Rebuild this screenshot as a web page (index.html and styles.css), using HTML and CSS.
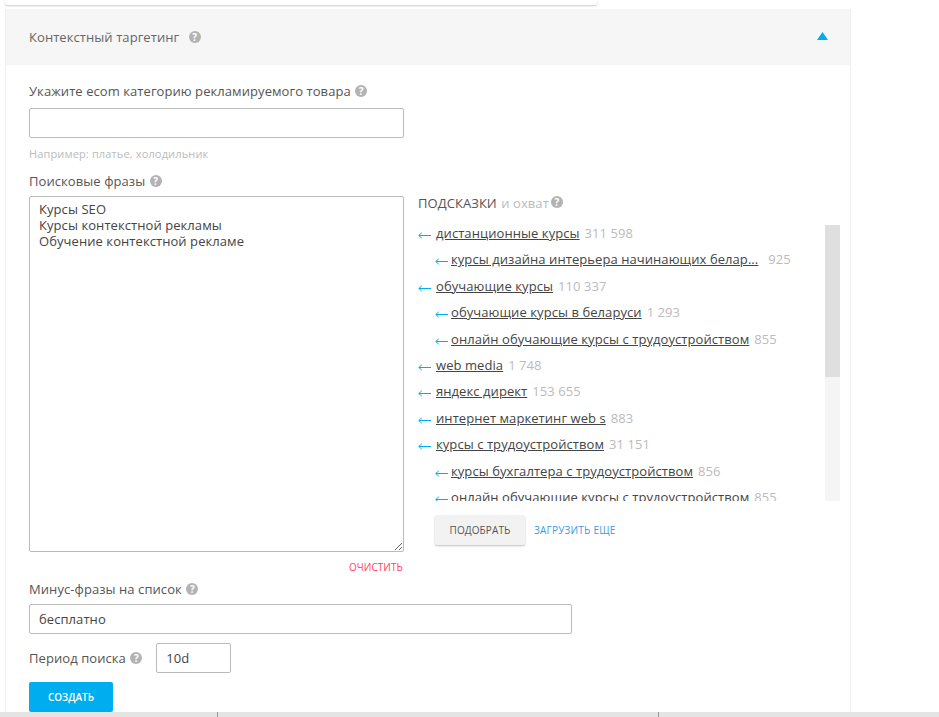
FILE: index.html
```html
<!DOCTYPE html>
<html lang="ru">
<head>
<meta charset="utf-8">
<title>Контекстный таргетинг</title>
<link rel="stylesheet" href="styles.css">
</head>
<body>
<svg class="defs" width="0" height="0"><symbol id="arrow-left" viewBox="0 0 13 7"><path d="M13 3.5H.8M3.8.8.8 3.5l3 2.7" fill="none" stroke="#00aeef"/></symbol></svg>
<div class="page">
  <div class="top-card"></div>
  <section class="panel">
    <header class="panel-head">
      <h2 class="panel-title">Контекстный таргетинг <span class="q q-title">?</span></h2>
      <svg class="caret" width="11" height="8" viewBox="0 0 11 8"><path d="M5.5 0 11 8H0z" fill="#00aeef"/></svg>
    </header>
    <div class="panel-body">
      <label class="label label-first">Укажите ecom категорию рекламируемого товара <span class="q">?</span></label>
      <input class="field field-cat" type="text">
      <p class="hint">Например: платье, холодильник</p>
      <label class="label label-phrases">Поисковые фразы <span class="q">?</span></label>
      <div class="columns">
        <div class="col-left">
          <textarea class="phrases">Курсы SEO
Курсы контекстной рекламы
Обучение контекстной рекламе</textarea>
          <a class="clear">ОЧИСТИТЬ</a>
        </div>
        <div class="col-right">
          <div class="hints-title">ПОДСКАЗКИ <span class="muted">и охват</span><span class="q q-tight">?</span></div>
          <div class="scroll-box">
            <ul class="hints">
              <li class="hint-row"><svg class="arrow"><use href="#arrow-left"/></svg><a>дистанционные курсы</a><span class="num">311 598</span></li>
              <li class="hint-row sub"><svg class="arrow"><use href="#arrow-left"/></svg><a>курсы дизайна интерьера начинающих белар...</a><span class="num num-wide">925</span></li>
              <li class="hint-row"><svg class="arrow"><use href="#arrow-left"/></svg><a>обучающие курсы</a><span class="num">110 337</span></li>
              <li class="hint-row sub"><svg class="arrow"><use href="#arrow-left"/></svg><a>обучающие курсы в беларуси</a><span class="num">1 293</span></li>
              <li class="hint-row sub"><svg class="arrow"><use href="#arrow-left"/></svg><a>онлайн обучающие курсы с трудоустройством</a><span class="num">855</span></li>
              <li class="hint-row"><svg class="arrow"><use href="#arrow-left"/></svg><a>web media</a><span class="num">1 748</span></li>
              <li class="hint-row"><svg class="arrow"><use href="#arrow-left"/></svg><a>яндекс директ</a><span class="num">153 655</span></li>
              <li class="hint-row"><svg class="arrow"><use href="#arrow-left"/></svg><a>интернет маркетинг web s</a><span class="num">883</span></li>
              <li class="hint-row"><svg class="arrow"><use href="#arrow-left"/></svg><a>курсы с трудоустройством</a><span class="num">31 151</span></li>
              <li class="hint-row sub"><svg class="arrow"><use href="#arrow-left"/></svg><a>курсы бухгалтера с трудоустройством</a><span class="num">856</span></li>
              <li class="hint-row sub"><svg class="arrow"><use href="#arrow-left"/></svg><a>онлайн обучающие курсы с трудоустройством</a><span class="num">855</span></li>
            </ul>
            <div class="scrollbar"><div class="thumb"></div></div>
          </div>
          <div class="actions">
            <button class="btn-pick" type="button">ПОДОБРАТЬ</button>
            <a class="more">ЗАГРУЗИТЬ ЕЩЕ</a>
          </div>
        </div>
      </div>
      <label class="label label-minus">Минус-фразы на список <span class="q">?</span></label>
      <input class="field field-minus" type="text" value="бесплатно">
      <div class="period">
        <label class="label label-period">Период поиска <span class="q">?</span></label>
        <input class="field field-period" type="text" value="10d">
      </div>
      <button class="btn-create" type="button">СОЗДАТЬ</button>
    </div>
  </section>
  <div class="bottom-bar"><span class="seg seg-a"></span><span class="seg seg-b"></span></div>
</div>
</body>
</html>
```
FILE: styles.css
```css
* { box-sizing: border-box; }
html, body { margin: 0; padding: 0; background: #fff; }
body { font-family: "Open Sans", "Noto Sans", sans-serif; font-size: 13px; letter-spacing: .07px; color: #555; }
.defs { position: absolute; }
.page { width: 939px; height: 717px; overflow: hidden; display: flex; flex-direction: column; }
.top-card { flex: none; width: 592px; height: 5px; margin: 0 0 4px 5px; background: #fff; border-radius: 0 0 2px 2px; box-shadow: 0 1px 2px rgba(0,0,0,.22); }
.panel { flex: 1; min-height: 0; width: 846px; margin-left: 5px; border: solid #eee; border-width: 0 1px; overflow: hidden; }
.panel-head { height: 56px; background: #f6f6f6; display: flex; align-items: center; justify-content: space-between; padding: 0 22px 0 23px; }
.panel-title { margin: 0; font-size: 13px; line-height: 18px; font-weight: 400; color: #666; }
.q { display: inline-block; width: 12px; height: 12px; border-radius: 50%; background: #b3b3b3; color: #fff; font-size: 10px; line-height: 12px; font-weight: 700; text-align: center; letter-spacing: 0; vertical-align: 1px; }
.q-title { margin-left: 6px; }
.q-tight { margin-left: 2px; vertical-align: 2px; }
.label .q { margin-left: 1px; }
.caret { display: block; margin-top: -3px; }
.panel-body { padding: 17px 0 0 23px; }
.label { display: block; font-size: 13px; line-height: 18px; color: #555; }
.field { display: block; height: 30px; border: 1px solid #bbb; border-radius: 2px; padding: 0 9px; font: 13px "Open Sans", "Noto Sans", sans-serif; letter-spacing: .07px; color: #444; background: #fff; outline: 0; }
.field-cat { width: 375px; margin-top: 8px; }
.hint { margin: 8px 0 0; font-size: 11px; letter-spacing: .14px; line-height: 16px; color: #bbb; }
.label-phrases { margin-top: 10px; }
.columns { display: flex; margin-top: 6px; }
.col-left { width: 375px; flex: none; }
.phrases { display: block; width: 375px; height: 356px; border: 1px solid #bbb; border-radius: 2px; padding: 4px 9px; font: 13px/16px "Open Sans", "Noto Sans", sans-serif; letter-spacing: .07px; color: #444; background: #fff; outline: 0; resize: vertical; }
.clear { display: block; margin-top: 8px; text-align: right; padding-right: 1px; font-size: 10px; line-height: 14px; color: #ff4560; }
.col-right { width: 422px; flex: none; margin-left: 14px; }
.hints-title { font-size: 13px; line-height: 14px; color: #555; }
.muted { color: #bbb; margin-left: 1px; }
.scroll-box { margin-top: 15px; height: 276px; display: flex; justify-content: space-between; overflow: hidden; }
.hints { list-style: none; margin: -1px 0 0; padding: 0; width: 400px; }
.hint-row { height: 26.4px; font-size: 13px; line-height: 18px; white-space: nowrap; }
.hint-row.sub { padding-left: 17px; }
.arrow { display: inline-block; width: 13px; height: 7px; margin-right: 5px; vertical-align: -1px; }
.sub .arrow { margin-right: 3px; }
.hint-row a { color: #444; text-decoration: underline; }
.num { margin-left: 5px; color: #bbb; }
.num-wide { margin-left: 10px; }
.scrollbar { width: 15px; height: 276px; background: #f5f5f5; flex: none; }
.thumb { height: 152px; background: #dfdfdf; }
.actions { display: flex; align-items: center; margin: 14px 0 0 17px; }
.btn-pick { width: 90px; height: 30px; border: 0; border-radius: 2px; background: #f2f2f2; box-shadow: 0 1px 2px rgba(0,0,0,.25); font: 10px "Open Sans", "Noto Sans", sans-serif; letter-spacing: .1px; color: #555; }
.more { margin-left: 9px; font-size: 10px; letter-spacing: .2px; color: #3a9be0; }
.label-minus { margin-top: 6px; }
.field-minus { width: 543px; margin-top: 6px; }
.period { display: flex; align-items: center; margin-top: 9px; }
.field-period { width: 75px; margin-left: 14px; }
.btn-create { display: block; width: 84px; height: 30px; margin-top: 9px; border: 0; border-radius: 2px; background: #00aeef; color: #fff; font: 600 10px "Open Sans", "Noto Sans", sans-serif; }
.bottom-bar { flex: none; height: 5px; background: #e4e4e4; display: flex; }
.seg { height: 5px; border-right: 1px solid #999; }
.seg-a { width: 218px; }
.seg-b { width: 441px; }
```
